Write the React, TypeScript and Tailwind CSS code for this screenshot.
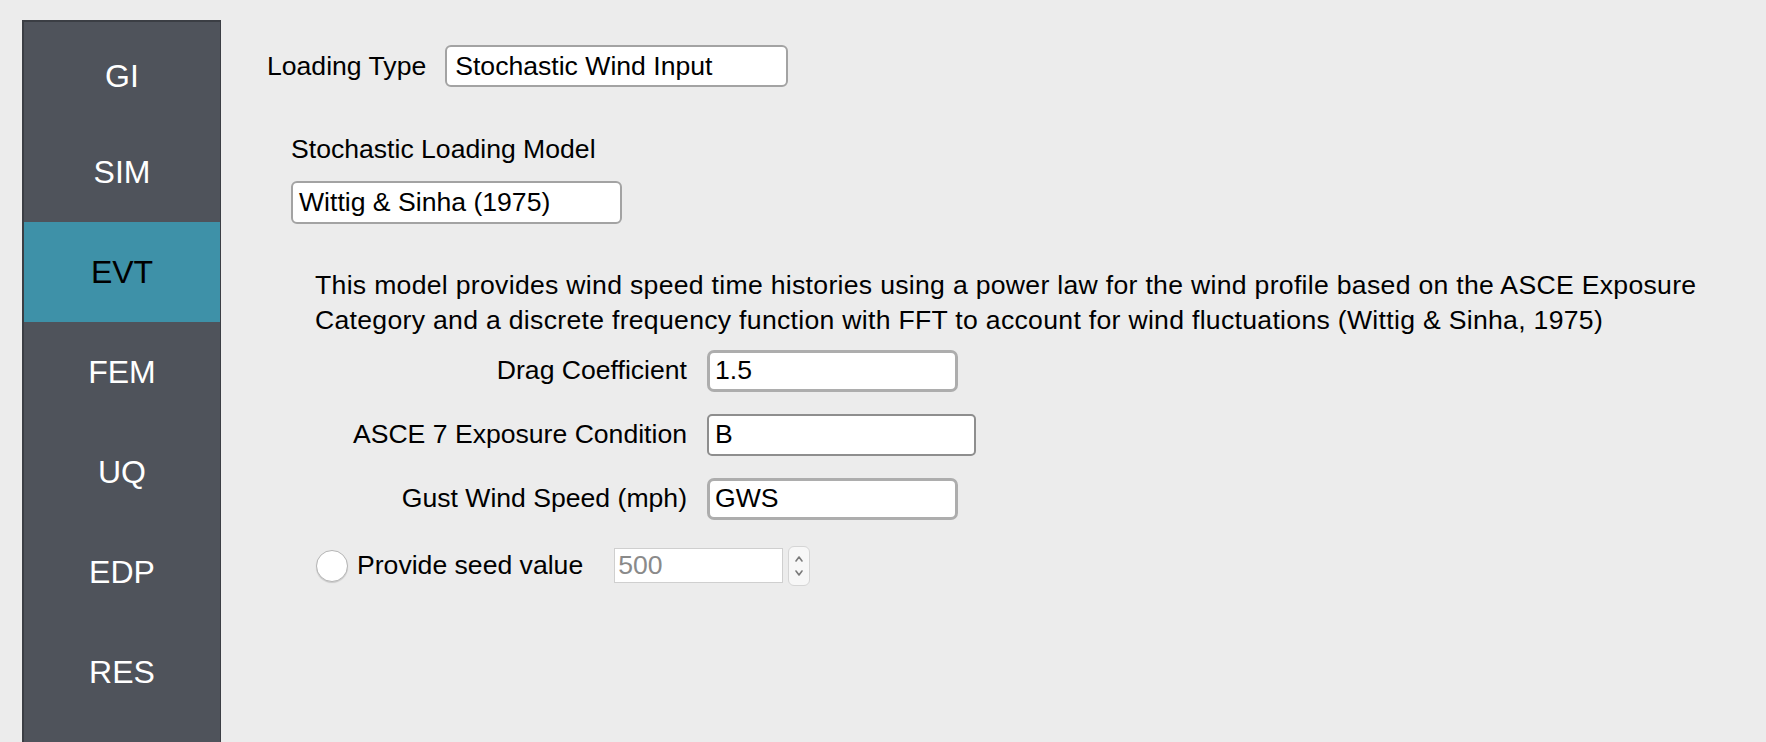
import React from "react";

const items = ["GI", "SIM", "EVT", "FEM", "UQ", "EDP", "RES"];

export default function App() {
  return (
    <div
      className="w-full h-[742px] bg-[#ececec] flex overflow-hidden text-black"
      style={{ fontFamily: '"Liberation Sans", Arial, sans-serif' }}
    >
      {/* Sidebar */}
      <div className="ml-[22px] mt-[20px] w-[199px] shrink-0 bg-[#4f535b] border-t-2 border-l-2 border-r border-[#3b3e44] flex flex-col">
        {items.map((it) => (
          <div
            key={it}
            className={
              it === "EVT"
                ? "h-[100px] flex items-center justify-center bg-[#3e91a8] text-black text-[32px]"
                : it === "GI"
                ? "h-[100px] flex items-center justify-center text-white text-[32px] pt-[8px]"
                : "h-[100px] flex items-center justify-center text-white text-[32px]"
            }
          >
            {it}
          </div>
        ))}
      </div>

      {/* Main */}
      <div className="flex flex-col pl-[46px] text-[26.6px] leading-none">
        <div className="mt-[45px] flex items-center h-[42px]">
          <span className="mr-[19px]">Loading Type</span>
          <div className="w-[343px] h-[42px] bg-white border-2 border-[#a3a3a3] rounded-[6px] flex items-center px-[8px]">
            Stochastic Wind Input
          </div>
        </div>

        <div className="ml-[24px] mt-[49px]">Stochastic Loading Model</div>

        <div className="ml-[24px] mt-[18px] w-[331px] h-[43px] bg-white border-2 border-[#a3a3a3] rounded-[6px] flex items-center px-[6px]">
          Wittig &amp; Sinha (1975)
        </div>

        <div className="ml-[48px] mt-[44px] leading-[35px] tracking-[0.3px]">
          <div>This model provides wind speed time histories using a power law for the wind profile based on the ASCE Exposure</div>
          <div>Category and a discrete frequency function with FFT to account for wind fluctuations (Wittig &amp; Sinha, 1975)</div>
        </div>

        <div className="ml-[49px] mt-[12px] grid grid-cols-[371px_auto] gap-x-[20px] gap-y-[22px] items-center">
          <div className="text-right">Drag Coefficient</div>
          <div className="w-[251px] h-[42px] bg-white border-[3px] border-[#adadad] rounded-[7px] flex items-center px-[5px]">1.5</div>
          <div className="text-right">ASCE 7 Exposure Condition</div>
          <div className="w-[269px] h-[42px] bg-white border-2 border-[#8e8e8e] rounded-[5px] flex items-center px-[6px]">B</div>
          <div className="text-right">Gust Wind Speed (mph)</div>
          <div className="w-[251px] h-[42px] bg-white border-[3px] border-[#adadad] rounded-[7px] flex items-center px-[5px]">GWS</div>
        </div>

        <div className="ml-[49px] mt-[26px] flex items-center h-[40px]">
          <div className="w-[32px] h-[32px] rounded-full bg-white border border-[#b5b5b5] shadow-[0_1px_1px_rgba(0,0,0,0.15)]" />
          <span className="ml-[9px]">Provide seed value</span>
          <div className="ml-[31px] w-[169px] h-[35px] bg-white border border-[#cfcfcf] flex items-center px-[3px] text-[#8a8a8a]">500</div>
          <div className="ml-[5px] w-[22px] h-[40px] rounded-[6px] bg-[#f7f7f7] border border-[#d5d5d5] flex flex-col items-center justify-center">
            <svg width="12" height="30" viewBox="0 0 12 30" fill="none" stroke="#7a7a7a" strokeWidth="1.6" strokeLinecap="round" strokeLinejoin="round">
              <path d="M3 10 L6 6 L9 10" />
              <path d="M3 20 L6 24 L9 20" />
            </svg>
          </div>
        </div>
      </div>
    </div>
  );
}
